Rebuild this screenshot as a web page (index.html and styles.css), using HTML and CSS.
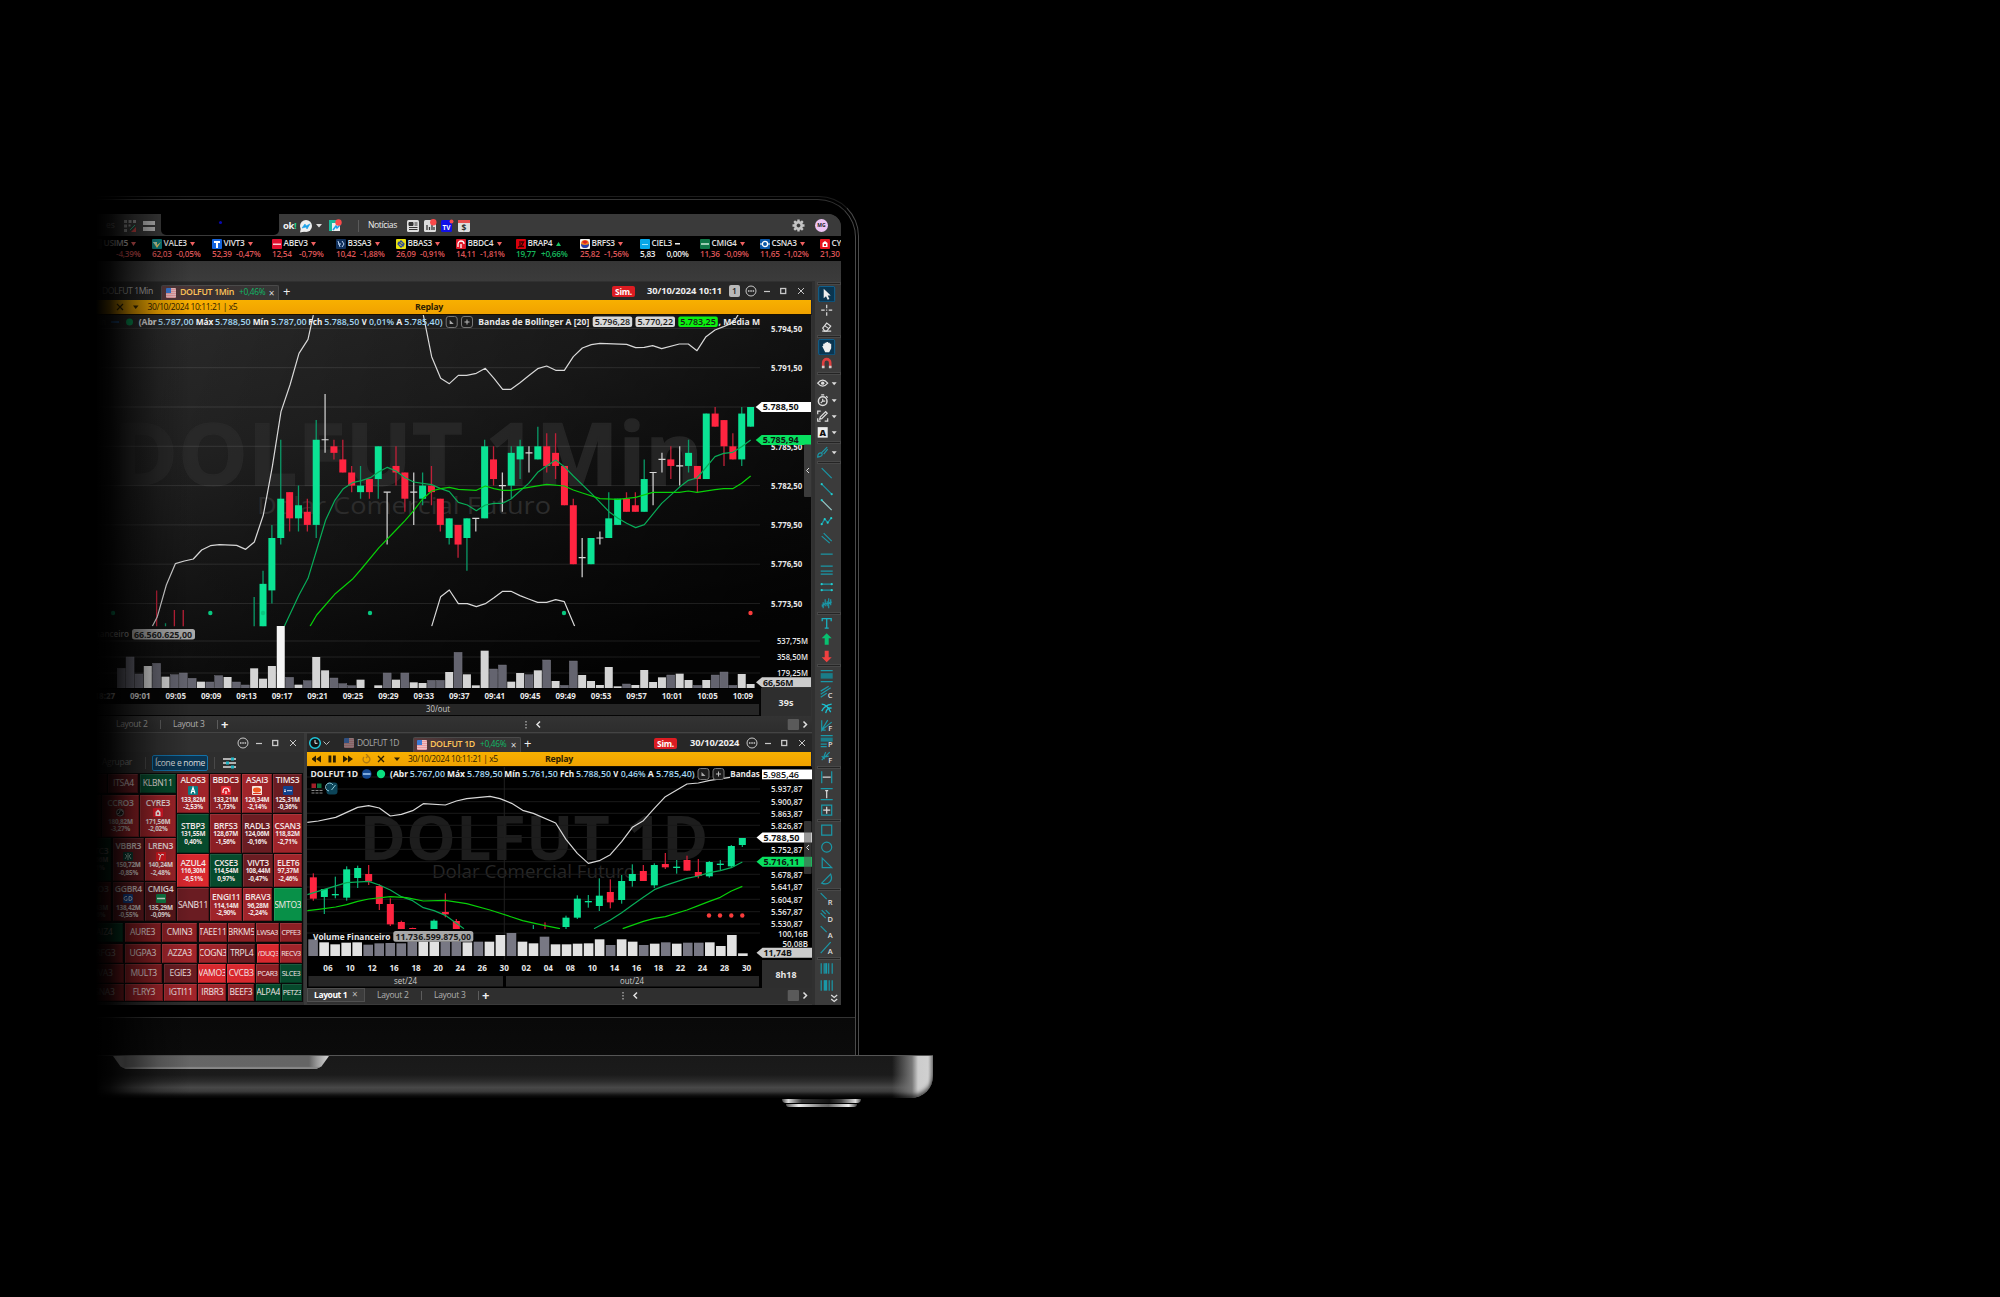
FILE: index.html
```html
<!DOCTYPE html>
<html lang="pt-BR">
<head>
<meta charset="utf-8">
<title>Trading platform</title>
<link rel="stylesheet" href="styles.css">
</head>
<body>
<main class="page">
<div class="laptop">
  <div class="lid">
    <div class="screen">
      <header class="appbar">
        <span class="faint">es</span>
        <svg width="12" height="12" viewBox="0 0 12 12"><path d="M0 0h3v3H0zM4.500 0h3v3h-3zM9 0h3v3H9zM0 4.500h3v3H0zM4.500 4.500h2v2h-2zM0 9h3v3H0z" fill="#999"/><path d="M7 12l5-5v5z" fill="#c44"/><path d="M6 10l5-5" stroke="#3b8" /></svg>
        <svg width="12" height="12" viewBox="0 0 12 12"><path d="M0 1h12v4H0zM0 7h12v4H0z" fill="#bdbdbd"/></svg>
        <div class="camera"><i></i></div>
        <b class="brand">ok<em>!</em></b>
        <svg width="14" height="14" viewBox="0 0 14 14"><circle cx="7" cy="7" r="6" fill="#eee"/><path d="M1 13.500l1-5 4 4z" fill="#eee"/><path d="M3 9l3-4 1 2 4-2-3 5-1-2z" fill="#18a0e8" stroke="#18a0e8" stroke-width=".6"/></svg>
        <svg width="6" height="4" viewBox="0 0 6 4"><path d="M0 0h6L3 3.5z" fill="#ddd"/></svg>
        <svg width="13" height="13" viewBox="0 0 13 13"><path d="M0 1h9v11H0z" fill="#19b89a"/><path d="M3 4h8v8H3z" fill="#eee"/><path d="M4 11l3-4 1 2 3-3" stroke="#18a0e8" stroke-width="1.600" fill="none"/><circle cx="9.500" cy="3.500" r="3.200" fill="#fa4a4a"/></svg>
        <span class="rule"></span>
        <span class="news">Notícias</span>
        <svg width="12" height="12" viewBox="0 0 12 12"><rect width="12" height="12" rx="1.500" fill="#ddd"/><path d="M2 2.500h4v3H2zM7.500 3h3M7.500 5h3M2 7.500h8.500M2 9.500h8.500" stroke="#333" fill="#333" stroke-width="1"/></svg>
        <svg width="13" height="13" viewBox="0 0 13 13"><rect y="1" width="12" height="12" rx="1.500" fill="#ddd"/><path d="M3 11V6M5.500 11V8M8 11V6M10 11V8" stroke="#333" stroke-width="1.300"/><circle cx="9.300" cy="3.300" r="3.200" fill="#fa4a4a"/></svg>
        <svg width="13" height="13" viewBox="0 0 13 13"><rect y="1" width="11" height="12" rx="1.500" fill="#1010e8"/><text x="5.500" y="10.500" text-anchor="middle" font-size="6.500" font-weight="700" fill="#fff">TV</text><circle cx="10.500" cy="2.500" r="2" fill="#fa4a4a"/></svg>
        <svg width="12" height="12" viewBox="0 0 12 12"><rect width="12" height="12" rx="1.500" fill="#ddd"/><path d="M0 0h12v3H0z" fill="#e95050"/><text x="6" y="11" text-anchor="middle" font-size="8.500" font-weight="700" fill="#333">$</text></svg>
        <svg class="gear" width="13" height="13" viewBox="-6.500 -6.500 13 13"><circle r="3.200" fill="none" stroke="#c4c4c4" stroke-width="2.600"/><path d="M0-6v3M0 3v3M-6 0h3M3 0h3M-4.300-4.300l2 2M2.300 2.300l2 2M-4.300 4.300l2-2M2.300-2.300l2-2" stroke="#c4c4c4" stroke-width="2.400"/></svg>
        <span class="avatar">MG</span>
      </header>
      <div class="ticker" id="ticker"></div>
      <div class="band"></div>
      <div class="desk">
        <div class="windows">
          <div class="winhead main-head">
            <span class="idle">DOLFUT 1Min</span>
            <div class="tab"><i class="flag"></i><b>DOLFUT 1Min</b><em>+0,46%</em><span>×</span></div>
            <span class="plus">+</span>
            <b class="sim">Sim.</b>
            <b class="date">30/10/2024 10:11</b>
            <span class="badge">1</span>
            <svg class="winbtns" width="62" height="12" viewBox="0 0 62 12"><use href="#wb"/></svg>
          </div>
          <div class="replay replay-main">
            <svg width="30" height="8" viewBox="0 0 30 8"><path d="M3 1l6 6M9 1l-6 6" stroke="#3a2a00" stroke-width="1.200"/><path d="M19 2.500h5.500L21.700 6z" fill="#3a2a00"/></svg>
            <span class="stamp">30/10/2024 10:11:21 | x5</span><b>Replay</b>
          </div>
          <svg class="chart" id="mainChart" width="732" height="401" viewBox="80 315 732 401"></svg>
          <div class="layouts layouts-main">
            <span>Layout 2</span><i></i><span>Layout 3</span><i></i><b class="add">+</b>
            <svg width="292" height="13" viewBox="520 0 292 13"><use href="#scroll"/></svg>
          </div>
          <div class="lower">
            <section class="heat">
              <div class="winhead heat-head"><svg class="winbtns" width="62" height="12" viewBox="0 0 62 12"><use href="#wb"/></svg></div>
              <div class="filters"><span>Agrupar</span><i></i><b>Ícone e nome</b><i></i>
                <svg width="14" height="12" viewBox="0 0 14 12"><path d="M0 2h13M0 6h13M0 10h13" stroke="#ddd" stroke-width="1.300"/><path d="M8 .5h3v3H8zM3 4.500h3v3H3zM8 8.500h3v3H8z" fill="#23b5c5"/></svg></div>
              <div class="map" id="map"></div>
            </section>
            <section class="daily">
              <div class="winhead daily-head">
                <svg width="24" height="14" viewBox="0 0 24 14"><circle cx="7" cy="7" r="5.300" fill="#111" stroke="#1fc8dc" stroke-width="1.500"/><path d="M7 4v3.300h2.500" stroke="#eee" fill="none"/><path d="M15.500 5.500l3 3 3-3" stroke="#bbb" fill="none"/></svg>
                <div class="idletab"><i class="flag"></i><span>DOLFUT 1D</span></div>
                <div class="tab"><i class="flag"></i><b>DOLFUT 1D</b><em>+0,46%</em><span>×</span></div>
                <span class="plus">+</span>
                <b class="sim">Sim.</b>
                <b class="date">30/10/2024</b>
                <svg class="winbtns" width="62" height="12" viewBox="0 0 62 12"><use href="#wb"/></svg>
              </div>
              <div class="replay replay-daily">
                <svg width="96" height="10" viewBox="5 0 96 10"><path d="M9 1.500v7L4.500 5zM14 1.500v7L9 5zM21.500 1.500h2.800v7h-2.800zM26 1.500h2.800v7H26zM36 1.500v7L41 5zM41 1.500v7L46 5z" fill="#2a1e00"/><path d="M60 2a3.400 3.400 0 1 1-3 1M59 0l2 2-2 2" stroke="#b07a10" fill="none" stroke-width="1.300"/><path d="M71 2l6 6M77 2l-6 6" stroke="#2a1e00" stroke-width="1.300"/><path d="M87 3.500h6L90 7z" fill="#2a1e00"/></svg>
                <span class="stamp">30/10/2024 10:11:21 | x5</span><b>Replay</b>
              </div>
              <svg class="chart" id="dailyChart" width="505" height="221" viewBox="307 767 505 221"></svg>
              <div class="layouts layouts-daily">
                <b class="on">Layout 1 <small>×</small></b><span>Layout 2</span><i></i><span>Layout 3</span><i></i><b class="add">+</b>
                <svg width="195" height="13" viewBox="617 0 195 13"><use href="#scroll2"/></svg>
              </div>
            </section>
          </div>
        </div>
        <aside class="tools" id="tools"></aside>
      </div>
    </div>
    <div class="chin"></div>
  </div>
  <div class="base"><div class="lip"></div></div>
  <div class="foot"><i></i><i></i></div>
  <div class="fade"></div>
</div>
</main>
<svg class="defs" width="0" height="0">
  <defs>
    <g id="wb" fill="none" stroke="#c8c8c8"><circle cx="6" cy="6" r="5"/><path d="M3 6h1.500M5.300 6h1.500M7.600 6h1.500" stroke-width="1.500"/><path d="M19 6.500h6" stroke-width="1.200"/><rect x="35.700" y="3.500" width="5" height="5" stroke-width="1.300"/><path d="M53 3l6 6M59 3l-6 6"/></g>
    <g id="scroll"><path d="M526 3v1.500M526 6v1.500M526 9v1.500" stroke="#bbb" stroke-width="1.200"/><path d="M540 3.500L537 6.500l3 3M803.500 3.500l3 3-3 3" fill="none" stroke="#e0e0e0" stroke-width="1.500"/><rect x="787.700" y="1" width="11.300" height="11" rx="1" fill="#5a5a5a"/></g>
    <g id="scroll2"><path d="M623 3v1.500M623 6v1.500M623 9v1.500" stroke="#bbb" stroke-width="1.200"/><path d="M637 3.500L634 6.500l3 3M803.500 3.500l3 3-3 3" fill="none" stroke="#e0e0e0" stroke-width="1.500"/><rect x="787.700" y="1" width="11.300" height="11" rx="1" fill="#5a5a5a"/></g>
  </defs>
</svg>
<script src="app.js"></script>
</body>
</html>
```

FILE: styles.css
```css
* { box-sizing: border-box; }
html, body { margin: 0; background: #000; }
body { font-family: "Open Sans", "Noto Sans", sans-serif; font-size: 8.5px; line-height: 1; color: #ddd; }
i, em { font-style: normal; }
svg { display: block; flex: none; }
svg text { font-family: "Open Sans", "Noto Sans", sans-serif; }
.defs { position: absolute; }
.page { width: 2000px; height: 1297px; overflow: hidden; background: #000; }
.laptop { position: relative; width: 860px; margin-left: 80px; padding-top: 196px; }
.fade { position: absolute; inset: 0 auto 0 0; width: 110px; background: linear-gradient(90deg, #000 0, #000 16px, rgba(0,0,0,.88) 30px, rgba(0,0,0,.52) 52px, rgba(0,0,0,.2) 78px, transparent 110px); }

/* lid */
.lid { position: relative; width: 779px; height: 859px; padding-top: 18px; border-top: 1px solid #1c1c1c; border-right: 1px solid #4a4a4a; border-radius: 0 40px 0 0; }
.lid::before { content: ""; position: absolute; inset: 2px 2px 0 0; border-top: 1px solid #333; border-right: 1px solid #4a4a4a; border-radius: 0 38px 0 0; }
.screen { position: relative; display: flex; flex-direction: column; width: 761px; height: 791px; margin-top: -1px; overflow: hidden; border-radius: 0 13px 0 0; background: #3a3a3a; }
.chin { width: 776px; height: 38px; margin-top: 12px; border-top: 1px solid #333; background: linear-gradient(#090909, #0b0b0b); }
.base { position: relative; width: 853px; height: 43px; border-top: 1px solid #555; border-radius: 0 0 22px 0;
  background: linear-gradient(90deg, transparent 812px, #777 832px, #ccc 838px, #d0d0d0 848px, #888 853px), linear-gradient(#191919 0, #1b1b1b 45%, #2c2c2c 60%, #484848 75%, #3c3c3c 85%, #161616 95%, #0a0a0a); box-shadow: inset 0 -4px 4px -1px rgba(0,0,0,.65); }
.lip { width: 216px; height: 13px; margin-left: 33px; clip-path: polygon(0 0, 100% 0, 96.5% 80%, 94% 100%, 6% 100%, 3.500% 80%); background: linear-gradient(90deg, #ddd 0, #777 12px, #666 20px, #656565 196px, #999 204px, #ccc 214px); box-shadow: inset 0 -2px 1px #888; }
.foot { display: flex; flex-direction: column; align-items: center; gap: 1px; width: 79px; margin-left: 702px; padding-top: 1px; }
.foot i { width: 79px; height: 4px; border-radius: 0 0 4px 4px; background: linear-gradient(90deg, #444, #ddd 8%, #333 25%, #111 60%, #444 75%, #ddd 93%, #444); }
.foot i + i { width: 71px; height: 3px; background: linear-gradient(90deg, #555, #eee 18%, #777 50%, #666 60%, #eee 88%, #444); }

/* application bar */
.appbar { display: grid; flex: none; height: 22px; align-items: center; padding: 1px 0 0 26px; background: #3a3a3a;
  grid-template-columns: 18px 19px 18px 122px 16px 17px 13px 29px 10px 39px 17px 17px 17px 334px 23px 14px; }
.faint { color: #aaa; }
.camera { align-self: start; width: 118px; height: 21px; margin-top: -1px; border-radius: 0 0 5px 5px; background: #000; }
.camera i { display: block; width: 3px; height: 3px; margin: 7px 0 0 58px; border-radius: 50%; background: #0a0ab0; }
.brand { font-size: 9.5px; letter-spacing: -.4px; color: #f2f2f2; }
.brand em { color: #1fd28f; }
.rule { width: 1px; height: 12px; background: #5a5a5a; }
.news { font-size: 8.600px; letter-spacing: -.4px; color: #eee; font-weight: 500; }
.avatar { width: 13px; height: 13px; border-radius: 50%; background: #edc4f4; color: #222; font-size: 5px; line-height: 13px; text-align: center; font-weight: 700; }
.gear { justify-self: start; }

/* quotes */
.ticker { display: flex; flex: none; height: 25px; padding: 2px 0 0 12px; overflow: hidden; background: #000; }
.quote { display: grid; flex: none; grid-template-rows: 11px 11px; align-items: center; width: 60px; white-space: nowrap; font-size: 8.300px; letter-spacing: -.25px; color: #e0e0e0; font-weight: 600; }
.quote.wide { width: 64px; }
.quote div { display: flex; align-items: center; gap: 1.500px; }
.quote .vals { justify-content: space-between; width: 48.500px; font-size: 8.200px; letter-spacing: -.25px; font-weight: 600; }
.quote.wide .vals { width: 51.500px; }
.quote .ico { width: 10px; height: 10px; border-radius: 1px; }
.quote .arr { margin-left: 2px; }
.down .vals { color: #dc5456; }
.up .vals { color: #16b85c; }
.flat .vals { color: #eee; }

.band { flex: none; height: 20px; background: linear-gradient(#363636, #3b3b3b); }
.desk { display: flex; flex: 1; }
.windows { width: 732px; }

/* window headers */
.winhead { display: grid; height: 19px; align-items: center; background: #272727; border-top: 1px solid #303030; white-space: nowrap; }
.main-head { padding-left: 22px; grid-template-columns: 59px 120px 331px 35px 82px 16px 62px; }
.daily-head { grid-template-columns: 36px 69px 109px 132px 36px 56px 62px; padding-left: 1px; }
.heat-head { grid-template-columns: 62px; padding-left: 157px; background: #303030; }
.idle { font-size: 8.600px; letter-spacing: -.4px; color: #bbb; }
.tab { display: flex; align-items: center; align-self: end; width: 118px; height: 15px; padding: 0 0 1px 4px; border: 1px solid #4a4a4a; border-bottom: 0; border-radius: 2px 2px 0 0; background: linear-gradient(90deg, #5a3a3c, #3a3233 45px, #363636); color: #ffc55a; font-size: 8.800px; letter-spacing: -.35px; }
.daily-head .tab { width: 108px; padding-left: 3px; }
.tab b { margin: 0 5px 0 4px; font-weight: 600; }
.daily-head .tab b { margin: 0 5px 0 3px; }
.tab em { color: #10b866; font-size: 8.300px; letter-spacing: -.25px; }
.tab span { margin-left: auto; padding-right: 4px; color: #ddd; font-size: 10px; }
.flag { flex: none; width: 10px; height: 10px; border-radius: 1px; background: linear-gradient(#3a7ad8, #3a7ad8) 0 0/5px 5px no-repeat, repeating-linear-gradient(#f0c0c4 0 1px, #e89aa2 1px 2px); }
.idletab { display: flex; align-items: center; gap: 3px; font-size: 8.500px; letter-spacing: -.4px; color: #a8a8a8; }
.idletab .flag { opacity: .5; }
.plus { font-size: 13px; color: #eee; padding-left: 2px; }
.sim { width: 23px; height: 11px; border-radius: 2px; background: #dc1c22; color: #fff; font-size: 8.500px; line-height: 11px; letter-spacing: -.3px; text-align: center; }
.date { font-size: 9.300px; letter-spacing: -.1px; color: #eee; }
.badge { width: 11px; height: 12px; border-radius: 2px; background: #b8b8b8; color: #222; line-height: 12px; text-align: center; font-weight: 600; }

.replay { display: grid; height: 15px; align-items: center; border-right: 1px solid #1c2436; background: linear-gradient(#f8b000, #f0a200); border-bottom: 1px solid #191000; color: #2e2000; }
.replay-main { padding-left: 34px; grid-template-columns: 33.500px 267.500px 60px; }
.replay-daily { padding-left: 5px; grid-template-columns: 96px 137px 60px; }
.replay b { font-size: 8.800px; letter-spacing: -.25px; }
.stamp { font-size: 8.500px; letter-spacing: -.4px; font-weight: 500; white-space: nowrap; }

.layouts { display: grid; align-items: center; background: #2f2f2f; white-space: nowrap; color: #b0b0b0; font-size: 8.500px; letter-spacing: -.3px; }
.layouts i { width: 1px; height: 9px; background: #5c5c5c; }
.layouts .add { font-size: 13px; color: #eee; }
.layouts-main { height: 17px; padding-left: 36px; grid-template-columns: 44px 13px 44px 4px 299px 292px; background: linear-gradient(#333, #2d2d2d); border-bottom: 1px solid #444; }
.layouts-daily { height: 16px; padding-bottom: 2px; grid-template-columns: 70px 44px 13px 44px 4px 135px 195px; }
.on { width: 58px; height: 14px; padding-left: 7px; background: #3c3c3c; border: 1px solid #505050; color: #fff; line-height: 12px; }
.layouts-daily .on { padding-left: 6px; letter-spacing: -.4px; }
.on small { font-size: 10px; font-weight: 400; line-height: 1; margin-left: 3px; color: #bbb; }

/* lower panes */
.lower { display: flex; height: 272px; background: #3a3a3a; gap: 3px; }
.heat { width: 224px; background: #2e2e2e; }
.daily { width: 505px; }
.filters { display: grid; height: 21px; align-items: center; padding-left: 22px; grid-template-columns: 43px 7px 62px 9px 20px; font-size: 8.500px; letter-spacing: -.3px; white-space: nowrap; color: #999; }
.filters i { width: 1px; height: 12px; background: #484848; }
.filters b { width: 56px; height: 16px; border: 1px solid #1271a8; border-radius: 2px; background: #0b3552; color: #dcdcdc; font-weight: 500; line-height: 14px; text-align: center; }
.map { display: grid; gap: 1.3px; width: 223px; height: 229px; padding: 1px 1px 1px 0; background: #0a0a0a; grid-template-rows: 147.300px 1fr; }
.map-top { display: flex; gap: 1.300px; }
.map-col { display: flex; flex-direction: column; gap: 1.300px; }
.map-row { display: flex; gap: 1.300px; min-height: 0; }
.cell { display: flex; flex-direction: column; align-items: center; justify-content: center; gap: 1.300px; min-width: 0; overflow: hidden; border: 1px solid rgba(255,255,255,.09); border-right-color: rgba(0,0,0,.25); border-bottom-color: rgba(0,0,0,.25); white-space: nowrap; font-size: 6.400px; font-weight: 700; letter-spacing: -.2px; color: #f2e6e6; }
.cell b { font-size: 8.500px; font-weight: 500; letter-spacing: -.25px; }
.cell.big b { font-weight: 600; }
.cell b.sm { font-size: 7.300px; letter-spacing: -.4px; }
.cell .ico { width: 10px; height: 9px; border-radius: 1px; }

/* drawing tools */
.tools { display: flex; flex-direction: column; width: 29px; padding-top: 2px; border-left: 3px solid #303030; background: #3b3b3b; }
.tools hr { width: 22px; height: 1px; margin: 0 0 0 3px; border: 0; background: #242424; outline: .5px solid #484848; }
.tools > hr { flex: none; margin-bottom: 2px; }
.tools .gap { display: flex; flex: none; align-items: center; height: 4px; }
.tools svg { display: block; }
```

FILE: app.js
```js
const F = (n) => +n.toFixed(2);
const text = (x, y, s, o = {}) =>
  `<text x="${F(x)}" y="${F(y + (o.size || 9) * 0.357)}" font-size="${o.size || 9}" font-weight="${o.weight || 600}" fill="${o.fill || '#e8e8e8'}"` +
  `${o.anchor ? ` text-anchor="${o.anchor}"` : ''}${o.len ? ` textLength="${F(o.len)}" lengthAdjust="spacingAndGlyphs"` : ''}>${s}</text>`;
const rect = (x, y, w, h, fill, extra = '') => `<rect x="${F(x)}" y="${F(y)}" width="${F(w)}" height="${F(h)}" fill="${fill}" ${extra}/>`;
const line = (x1, y1, x2, y2, c, w = 1) => `<path d="M${F(x1)} ${F(y1)}L${F(x2)} ${F(y2)}" stroke="${c}" stroke-width="${w}"/>`;
const curve = (pts, c, w = 1.2) => `<polyline points="${pts}" fill="none" stroke="${c}" stroke-width="${w}" stroke-linejoin="round" vector-effect="non-scaling-stroke"/>`;
const tag = (x, y, label, fill, o = {}) =>
  `<path d="M${x} ${y}l6-5H812v10H${x + 6}z" fill="${fill}"/>` + text(x + 7, y, label, { fill: '#111', weight: 700, len: o.len || 36 });
const GREEN = '#0be394', RED = '#ff2440', WHITE = '#d8d8d8', MA1 = '#08ac58', MA2 = '#08d008';

/* ---- quotes ---- */
const quotes = [
  ['USIM5', '', '-4,39%', 'down', '#333', 0], ['VALE3', '62,03', '-0,05%', 'down', '#0c7c7c', 0], ['VIVT3', '52,39', '-0,47%', 'down', '#1464dc', 0],
  ['ABEV3', '12,54', '-0,79%', 'down', '#e01030', 1], ['B3SA3', '10,42', '-1,88%', 'down', '#10305c', 0], ['BBAS3', '26,09', '-0,91%', 'down', '#e8e010', 0],
  ['BBDC4', '14,11', '-1,81%', 'down', '#e01828', 0], ['BRAP4', '19,77', '+0,66%', 'up', '#d8000c', 1], ['BRFS3', '25,82', '-1,56%', 'down', '#f4f4f4', 0],
  ['CIEL3', '5,83', '0,00%', 'flat', '#08a8e8', 0], ['CMIG4', '11,36', '-0,09%', 'down', '#107848', 0], ['CSNA3', '11,65', '-1,02%', 'down', '#0c58a8', 0],
  ['CYRE3', '21,30', '-2,02%', 'down', '#e81420', 0]];
const marks = {
  VALE3: '<path d="M1 3h4l0 3 4-3-4 6z" fill="#e8c860"/><path d="M1 3h3l1 4z" fill="#9fd8d0"/>', VIVT3: '<path d="M2 2h6v2H6v5H4V4H2z" fill="#fff"/>',
  ABEV3: '<path d="M1 4.500h8v1.500H1z" fill="#f8c8d0"/>', B3SA3: '<path d="M2 2l2 6M2 5h3M6 2l2 3-2 3" stroke="#b8d0f0" fill="none"/>',
  BBAS3: '<path d="M2 5l3-3 3 3-3 3zM2 3l6 4" stroke="#2848a0" stroke-width="1.300" fill="none"/>', BBDC4: '<path d="M2 8V5a3 3 0 0 1 6 0M5 9V5" stroke="#fff" stroke-width="1.300" fill="none"/>',
  BRAP4: '<path d="M4 2v5a2 2 0 0 1-2 1M5 3h2.500L5 7.500h3" stroke="#300" stroke-width="1.300" fill="none"/>', BRFS3: '<circle cx="5" cy="5" r="4" fill="#f08020"/><path d="M1 5a4 4 0 0 0 8 0q-4 2-8 0" fill="#2840b0"/><path d="M2 3q3-3 6 0l-3 2z" fill="#e02020"/>',
  CIEL3: '<path d="M2 5.500h6" stroke="#9ce4fa" stroke-width="1.200"/>', CMIG4: '<path d="M1 5h8" stroke="#c8e8d4" stroke-width="1.400"/>',
  CSNA3: '<circle cx="5" cy="5" r="2.600" fill="none" stroke="#fff" stroke-width="1.300"/><path d="M0 5h3M7 5h3" stroke="#fff"/>', CYRE3: '<path d="M2.500 4L5 2l2.500 2v4h-5z" fill="#fff"/><path d="M4 5h2v2H4z" fill="#e81420"/>', USIM5: '' };
const arrow = { down: '<path d="M0 1h5L2.500 5z" fill="#f06060"/>', up: '<path d="M0 5h5L2.500 1z" fill="#18c060"/>', flat: '<path d="M0 2h5v1.600H0z" fill="#eee"/>' };
document.getElementById('ticker').innerHTML = quotes.map(([n, p, v, d, c, w]) =>
  `<div class="quote ${d}${w ? ' wide' : ''}"><div><svg class="ico" viewBox="0 0 10 10">${rect(0, 0, 10, 10, c)}${marks[n]}</svg>${n}<svg class="arr" width="5" height="6">${arrow[d]}</svg></div><div class="vals"><span>${p}</span><span>${v}</span></div></div>`).join('');

/* ---- one minute chart ---- */
const X = (k) => 750.6 - 8.865 * k;
const Y = (p) => 407 + (88.5 - p) * 13.1;
// [bars ago, open, high, low, close]
const bars = [[67,73,74.5,71.7,71.7],[66,71.7,72,71.7,71.8],[65,72,73,71.7,71.7],[64,72,73,71.7,71.7],[56,71.7,74,71.7,71.8],[55,71.7,76,71.7,75],[54,74.5,79.5,73.5,78.5],[53,78.5,86,78,81.5],[52,82,82,79,80],[51,80,82.5,79,81],[50,80.5,81.5,79,79.5],[49,79.5,87.5,78.5,86],[48,86,89.5,85,86],[47,85.5,86,84.5,85],[46,84.5,86,83.5,83.5],[45,83.5,84,82,82.5],[44,82,84,81.5,82.5],[43,83,83,81.5,82],[42,83,85.5,81.5,85.5],[41,82,82,78,82],[40,84,85.5,82.5,83.5],[39,83.5,83.5,80.5,81.5],[38,82,83.5,79.5,82],[37,81.5,83.5,81,82.5],[36,82.5,84,81,82],[35,81.5,81.5,79,79.5],[34,78.5,80,78,80],[33,79.5,79.5,77,78],[32,78.5,80,76,80],[31,80,80,79,80],[30,80,86,80,85.5],[29,84.5,85.5,82.5,83],[28,82.5,83.5,80.5,82.5],[27,82.5,85.5,81.5,85],[26,84.5,86,83,85.5],[25,85,85.5,83.5,85],[24,84.5,87,84.5,85.5],[23,85.5,86.5,83.5,84],[22,85,86.5,83,84],[21,84,84,81,81],[20,81,81.5,76.5,76.5],[19,77,78.5,75.5,77],[18,76.5,78.5,76.5,78.5],[17,78.5,79,78,78.5],[16,78.5,82,78.5,80],[15,79.5,81.5,79.5,81.5],[14,81.5,82,80.5,80.5],[13,81,82,80.5,80.5],[12,80.5,84.5,80.5,83],[11,83.5,83.5,81,83.5],[10,84.5,85,83.5,84.5],[9,84.5,85.5,83,84],[8,84,85.5,82.5,84],[7,84,86,83.5,85],[6,84,84,82,83],[5,83,88,83,88],[4,88,88.5,87,87],[3,87.5,87.5,84,85.5],[2,85.5,86.5,84.5,84.5],[1,84.5,88.5,84,88],[0,87,88.5,87,88.5]];
const vols = 'g59 g93 g42 w66 g74 w34 g40 g45 g29 w19 g18 g37 w33 g18 g9 w59 w28 w66 w186 g32 w10 g22 w93 w53 g30 g13 g7 w25 w0 w8 g45 w25 g45 w17 w15 g23 g23 w48 g107 w41 w8 w112 g57 g69 w19 w45 g40 w53 g84 w21 g8 g81 w39 w21 w9 w63 w5 g12 w9 w54 w18 w32 g39 w43 w24 g8 w24 g39 g48 g8 w42 w12'.split(' ');
const button = (x, y, plus) => `<rect x="${x - 5.5}" y="${y - 5.5}" width="11" height="11" rx="2.500" fill="#1c1c1c" stroke="#777"/>` + (plus ? `<path d="M${x - 2.5} ${y}h5M${x} ${y - 2.5}v5" stroke="#bbb"/>` : `<path d="M${x - 2} ${y - 2}v4h4z" fill="#aaa"/>`);

let m = `<defs><linearGradient id="bg" x1="0" y1="0" x2=".45" y2="1"><stop offset="0" stop-color="#2e2e2e"/><stop offset=".35" stop-color="#252525"/><stop offset="1" stop-color="#060606"/></linearGradient>
<linearGradient id="bgv" x1="0" x2="1" y1="0" y2=".3"><stop offset="0" stop-color="#000" stop-opacity="0"/><stop offset="1" stop-color="#000" stop-opacity=".55"/></linearGradient><clipPath id="plot"><rect x="80" y="315" width="680" height="311.300"/></clipPath></defs>`;
m += rect(80, 315, 732, 401, 'url(#bg)') + rect(80, 315, 732, 401, 'url(#bgv)') + rect(80, 689, 680, 27, '#050505');
m += text(113, 454.5, 'DOLFUT 1Min', { size: 86, weight: 700, fill: '#2a2a2a', len: 590 }).replace('fill=', 'stroke="#2a2a2a" stroke-width="1.500" opacity=".8" fill=');
m += text(257, 505, 'Dolar Comercial Futuro', { size: 24, weight: 400, fill: '#2c2c2c', len: 294 });
for (let p = 94.5; p > 73; p -= 3) m += line(80, Y(p), 760, Y(p), 'rgba(255,255,255,.1)', 1);
[641, 657, 673].forEach((y) => (m += line(80, y, 760, y, 'rgba(255,255,255,.1)', 1)));
m += '<g clip-path="url(#plot)">';
for (const [k, o, h, l, c] of bars) {
  const x = X(k), col = o === c ? '#d8d8d8' : c > o ? GREEN : RED;
  m += line(x, Y(h), x, Y(l), o === c ? '#c8c8c8' : c > o ? '#0a9a68' : '#c02038', 1.3);
  if (o === c) m += line(x - 3.5, Y(o), x + 3.5, Y(o), col, 1.2);
  else if (Math.abs(c - o) > 0.4 && k < 56) m += rect(x - 3.5, Y(Math.max(o, c)), 7, Math.abs(c - o) * 13.1, col);
}
m += '<g transform="translate(90 300) scale(.33333)">' +
  curve('187,979 202,950 229,855 256,791 283,783 310,777 335,750 361,737 388,734 440,736 467,748 493,726 520,645 547,500 573,335 600,255 627,160 654,118 670,45', WHITE) +
  curve('1000,45 1025,170 1052,235 1078,251 1105,226 1130,226 1159,220 1186,205 1212,235 1238,268 1263,268 1290,248 1316,227 1343,206 1370,198 1397,211 1423,211 1450,170 1477,144 1504,134 1530,130 1610,133 1637,143 1663,142 1688,137 1715,146 1768,132 1795,132 1821,152 1848,110 1875,90 1901,80 1920,72 1935,60 1945,43', WHITE) +
  curve('1025,979 1052,890 1078,870 1105,911 1132,911 1159,920 1186,911 1212,893 1238,874 1263,874 1290,887 1316,897 1343,907 1370,907 1397,899 1423,905 1454,979', WHITE) +
  curve('583,979 627,885 654,835 680,750 707,660 734,602 760,566 787,548 814,542 841,533 867,515 892,502 918,513 945,533 971,546 998,550 1025,554 1052,566 1078,575 1105,607 1132,615 1159,632 1186,615 1212,610 1238,610 1263,597 1290,573 1316,550 1343,517 1370,498 1397,480 1423,500 1450,528 1504,580 1557,635 1584,655 1610,670 1637,683 1663,674 1688,643 1715,610 1768,562 1795,541 1821,534 1848,502 1875,470 1901,460 1928,457 1955,440 1982,420', MA1) +
  curve('660,979 680,945 734,883 787,838 814,807 867,743 918,690 945,662 971,632 998,597 1025,573 1052,566 1078,562 1105,568 1159,571 1186,558 1212,566 1238,571 1263,571 1316,562 1370,553 1423,558 1450,570 1477,579 1530,596 1584,598 1637,592 1688,577 1768,577 1795,573 1821,577 1875,569 1901,566 1928,566 1955,550 1982,528', MA2) + '</g></g>';
[[113, 0], [210.3, 0], [263, 0], [370, 0], [564, 0], [750.5, 1]].forEach(([x, r]) => (m += `<circle cx="${x}" cy="613" r="2.200" fill="${r ? '#fa3c3c' : '#08c880'}"/>`));
vols.forEach((v, i) => { const h = +v.slice(1) / 3; if (h) m += rect(X(71 - i) - 4, 688 - h, 8, h, v[0] === 'g' ? '#64646f' : h > 50 ? '#f4f4f4' : '#d4d4d4', v[0] === 'g' ? 'stroke="#7a7a86" stroke-width=".4"' : ''); });
m += line(80, 688.5, 761, 688.5, '#000', 1);
m += text(88, 634, 'Financeiro', { weight: 600, fill: '#999', len: 41 }) + rect(132, 629, 63, 10.5, '#a8a8a8', 'rx="2.500"') + text(134, 634.3, '66.560.625,00', { weight: 700, fill: '#1a1a1a', len: 58 });
const header = (list, y) => list.map(([x, w, s, v]) => text(x, y, s, { weight: v ? 600 : 700, fill: v ? '#a4d8f4' : '#f0f0f0', len: w, size: 9.3 })).join('');
m += text(88, 322, '1Min', { fill: '#555', len: 18 }) + line(111, 322, 119, 322, '#2860a0', 2) + '<circle cx="129.500" cy="322" r="3.500" fill="#0a9c58"/>';
m += header([[138.7, 18, '(Abr', 0], [158, 35.7, '5.787,00', 1], [195.7, 17.7, 'Máx', 0], [215, 35.7, '5.788,50', 1], [252.7, 16, 'Mín', 0], [271, 35.7, '5.787,00', 1], [308.3, 14, 'Fch', 0], [324.3, 35, '5.788,50', 1], [361.7, 5, 'V', 0], [369, 25, '0,01%', 1], [396.3, 6, 'A', 0], [404.3, 38.3, '5.785,40)', 1]], 321.8);
m += button(451.7, 322, 0) + button(467, 322, 1) + text(478.3, 321.8, 'Bandas de Bollinger A [20]', { weight: 700, len: 111 });
[[592.7, '5.796,28', '#d8d8d8'], [635.5, '5.770,22', '#d8d8d8'], [678.3, '5.783,25', '#0cf010']].forEach(([x, s, c]) => (m += rect(x, 316.5, 39.5, 10.5, c, 'rx="2"') + text(x + 2, 321.8, s, { weight: 600, fill: '#1a1a1a', len: 35.5 })));
m += text(718.5, 321.8, ', Média M', { weight: 700, len: 41.5 });
['94,50', '91,50', '', '85,50', '82,50', '79,50', '76,50', '73,50'].forEach((s, i) => { if (s) m += text(771, 328.4 + i * 39.3, '5.7' + s, { len: 31.3, weight: 700 }); });
m += text(808, 641, '537,75M', { anchor: 'end', len: 31 }) + text(808, 657, '358,50M', { anchor: 'end', len: 31 }) + text(808, 673, '179,25M', { anchor: 'end', len: 31 });
m += rect(761, 688, 51, 28, '#2e2e2e') + tag(755.7, 407, '5.788,50', '#fff') + tag(755.7, 440, '5.785,94', '#08e060') + tag(756, 682.3, '66,56M', '#ccc', { len: 30.5 });
m += rect(804, 444.5, 7.5, 52.5, '#3c3c3c', 'rx="1"') + '<path d="M809 468l-2.500 2.500 2.500 2.500" fill="none" stroke="#ddd"/>' + text(786, 703.2, '39s', { anchor: 'middle', size: 9, weight: 700 });
['18:27', '09:01', '09:05', '09:09', '09:13', '09:17', '09:21', '09:25', '09:29', '09:33', '09:37', '09:41', '09:45', '09:49', '09:53', '09:57', '10:01', '10:05', '10:09'].forEach((s, i) => (m += text(104.8 + i * 35.45, 696, s, { anchor: 'middle', len: 20.5, weight: 700 })));
m += rect(80, 704, 679, 11, '#262626') + text(438, 709.3, '30/out', { anchor: 'middle', size: 8.5, weight: 400, fill: '#ccc', len: 24 });
m += rect(811, 315, 1, 401, '#333');
document.getElementById('mainChart').innerHTML = m;

/* ---- daily chart ---- */
let d = '<defs><clipPath id="plot2"><rect x="307" y="767" width="453" height="162"/></clipPath></defs>' + rect(307, 767, 505, 221, '#000');
d += text(359.5, 838, 'DOLFUT 1D', { size: 61, weight: 700, fill: '#1d1d1d', len: 349 }) + text(432, 871.5, 'Dolar Comercial Futuro', { size: 18.5, weight: 400, fill: '#262626', len: 203 });
const grid = [777, 789, 801.7, 813.3, 825.3, 837.5, 849.3, 861.7, 874.3, 887, 899.3, 911.7, 924, 933];
grid.forEach((y) => (d += line(307, y, 760, y, '#1a1a1a')));
d += line(504.3, 767, 504.3, 960, '#202020');
// [x, top, bottom, high, low, direction]; equal top and bottom marks a doji
const days = [[40,457,521,445,527,0],[73,492,516,492,567,1],[106,509,509,455,520,1],[140,433,518,424,527,1],[173,429,459,422,489,1],[206,447,469,420,480,0],[238,483,537,478,555,0],[271,537,598,520,603,0],[304,591,612,587,612,0],[338,609,612,608,612,0],[402,587,612,583,612,1],[436,561,568,505,577,0],[469,588,612,582,612,0],[700,612,612,600,612,1],[735,606,608,592,612,0],[798,578,606,572,612,1],[832,521,578,511,582,1],[865,530,530,510,548,1],[898,512,543,460,558,1],[931,501,532,463,550,0],[965,468,525,450,536,1],[997,447,468,418,485,1],[1030,438,468,420,468,0],[1063,420,481,415,489,1],[1096,417,427,384,432,0],[1130,427,427,405,446,1],[1161,405,437,392,437,0],[1195,441,453,402,460,0],[1228,411,454,408,458,1],[1261,418,418,405,436,1],[1294,363,424,360,428,1],[1327,339,360,339,366,1]];
d += '<g clip-path="url(#plot2)"><g transform="translate(300 725) scale(.33333)">';
for (const [x, t, b, h, l, up] of days) { d += rect(x - 1.8, h, 3.6, l - h, up ? '#0bb078' : '#d82038'); if (x !== 700 && x !== 735) d += rect(x - 10.5, t === b ? t - 2 : t, 21, Math.max(b - t, 4), up ? GREEN : RED); }
d += curve('22,292 55,288 107,277 140,262 173,247 206,242 238,249 271,273 304,268 338,257 370,236 436,240 469,228 500,221 570,214 600,221 635,235 668,256 700,265 767,294 798,343 832,385 865,415 898,407 931,389 965,350 997,307 1030,287 1063,250 1096,215 1161,177 1195,174 1230,166 1290,157', WHITE) +
  curve('22,509 73,493 140,473 206,469 238,480 271,495 304,515 338,527 370,548 402,557 436,571 469,595 492,611', MA1) + curve('882,611 931,585 965,563 997,540 1030,517 1063,494 1096,481 1160,460 1195,453 1228,443 1261,437 1294,428 1327,411', MA1) +
  curve('22,557 55,553 107,546 140,539 173,529 206,522 271,515 320,518 370,528 436,526 500,536 570,555 635,576 668,587 735,602 780,611', MA2) + curve('968,611 1030,589 1063,580 1096,575 1161,555 1195,542 1228,529 1261,517 1294,498 1327,484', MA2) + '</g></g>';
[709, 720, 731.3, 742.3].forEach((x) => (d += `<circle cx="${x}" cy="915.500" r="2.200" fill="#fa3c3c"/>`));
'g643 w652 w658 w653 w652 g659 g655 g654 g655 g650 w650 w650 g650 g650 w652 g650 w650 w630 g624 w650 w655 g635 w658 w658 w656 w655 w643 g660 w643 w650 g660 w656 g652 w656 g653 g653 w652 w663 w630 w685'.split(' ').forEach((v, i) => { const h = (693 - +v.slice(1)) / 3; d += rect(308.3 + i * 11.02, 956 - h, 9.6, h, v[0] === 'g' ? '#787884' : '#e2e2e2'); });
d += text(313, 936.3, 'Volume Financeiro', { weight: 700, len: 77.5 }) + rect(393.3, 931, 80, 10.8, '#a8a8a8', 'rx="2.500"') + text(395.5, 936.5, '11.736.599.875,00', { weight: 700, fill: '#1a1a1a', len: 75.5 });
d += text(310.5, 773.8, 'DOLFUT 1D', { weight: 700, len: 47.5 }) + '<circle cx="366.700" cy="774" r="4.800" fill="#144a94"/><path d="M363 774h7.500" stroke="#9cc4f0" stroke-width="1.600"/><circle cx="381" cy="774" r="4.200" fill="#0be080"/>';
d += header([[390, 18, '(Abr', 0], [409.7, 35.3, '5.767,00', 1], [447, 18, 'Máx', 0], [467, 35.7, '5.789,50', 1], [504.3, 16, 'Mín', 0], [522.3, 35.7, '5.761,50', 1], [560, 14, 'Fch', 0], [576, 35, '5.788,50', 1], [613.3, 5, 'V', 0], [620.7, 25, '0,46%', 1], [647.7, 6, 'A', 0], [656, 38.7, '5.785,40)', 1]], 773.8);
d += button(703.5, 774, 0) + button(718.5, 774, 1) + text(730.3, 773.8, 'Bandas', { weight: 700, len: 29.5 });
d += '<path d="M311.500 783.500h4.500v4.500h-4.500z" fill="#a02028"/><path d="M317 783.500h4.500v4.500H317z" fill="#107040"/><path d="M311.500 790.500h11M311.500 793h11" stroke="#888" stroke-dasharray="3 1"/><rect x="326.500" y="782.500" width="11" height="12" rx="3" fill="#0c4458"/><path d="M329 791a4 4 0 1 1 4-6M331.500 790l4-5" stroke="#8cc8d8" fill="none"/>';
['937', '900', '863', '826', '', '752', '', '678', '641', '604', '567', '530'].forEach((s, i) => { if (s) d += text(771, grid[i + 1], `5.${s},87`, { len: 31.5 }); });
d += text(808, 933.5, '100,16B', { anchor: 'end', len: 30 }) + text(808, 943.5, '50,08B', { anchor: 'end', len: 25.500 });
d += rect(762, 960, 50, 28, '#2e2e2e') + rect(762, 769.5, 50, 9.8, '#fff') + text(763, 774.3, '5.985,46', { fill: '#111', weight: 600, len: 36 });
d += tag(756.5, 837.5, '5.788,50', '#fff') + tag(756.5, 861.8, '5.716,11', '#08e060') + tag(756.5, 952.8, '11,74B', '#ccc', { len: 28.5 });
d += rect(804, 821, 7.5, 53, '#555', 'opacity=".6" rx="1"') + rect(804, 843, 7.5, 13, '#333') + '<path d="M809 845l-2.500 2.500 2.500 2.500" fill="none" stroke="#ddd"/>' + text(786, 974.5, '8h18', { anchor: 'middle', len: 21, weight: 700 });
['06', '10', '12', '16', '18', '20', '24', '26', '30', '02', '04', '08', '10', '14', '16', '18', '22', '24', '28', '30'].forEach((s, i) => (d += text(328 + i * 22.03, 967.3, s, { anchor: 'middle', len: 9.3, weight: 700 })));
d += rect(308.5, 976, 194.5, 10.5, '#262626') + rect(506, 976, 253, 10.5, '#262626') + text(405.5, 981, 'set/24', { anchor: 'middle', size: 8.5, weight: 400, fill: '#ccc', len: 23 }) + text(632, 981, 'out/24', { anchor: 'middle', size: 8.5, weight: 400, fill: '#ccc', len: 24 });
document.getElementById('dailyChart').innerHTML = d;

/* ---- heat map: [name, width, tone, value, change, icon colour] ---- */
const tone = { r: '#8c1f24', R: '#a0242a', b: '#d8282e', d: '#6a1c22', k: '#5a171c', g: '#064a2c', G: '#089048' };
const logos = {
  ALOS3: '<path d="M3 7.500L5 1.500l2 6M3.500 5.500h3" stroke="#fff" stroke-width="1.200" fill="none"/>', BBDC3: '<path d="M2 7V5a3 3 0 0 1 6 0v1M5 8V5" stroke="#fff" stroke-width="1.200" fill="none"/>',
  ASAI3: '<path d="M0 0h10v9H0z" fill="#f4e8e0"/><ellipse cx="5" cy="4" rx="4" ry="2.500" fill="#f05820"/><path d="M1 7.500h8" stroke="#e03020"/>', TIMS3: '<path d="M1 4h2M1 5.500h2M4 4.700h5" stroke="#d0dcf0"/>',
  CCRO3: '<circle cx="5" cy="4.500" r="3.500" fill="#222" stroke="#aaa"/><path d="M2 6q3 0 3-3t3 1" stroke="#aaa" fill="none"/>', CYRE3: '<path d="M2.500 4L5 1.500 7.500 4v4h-5z" fill="#fff"/><path d="M4 4.500h2v2H4z" fill="#e81828"/>',
  VBBR3: '<path d="M2 2l2 2-2 3M8 2L6 4l2 3M5 1v7" stroke="#a8d0c0" fill="none"/>', LREN3: '<path d="M3.500 8l1-5M4 4q2-3 4-1M2 2l2 1" stroke="#fff" fill="none"/>',
  RECO3: '', GGBR4: '<path d="M4 2.500H3a2 2 0 0 0 0 4h1v-2M6 2.500h1a2 2 0 0 1 0 4H6z" stroke="#e0e8f8" fill="none"/>', CMIG4: '<path d="M1 4.500h8" stroke="#d8f0e0" stroke-width="1.400"/>' };
const cell = ([n, w, t, v, c, ic]) => `<div class="cell${v ? ' big' : ''}" style="flex:${w} 1 0;background:${tone[t]}"><b class="${w < 74 && !v ? 'sm' : ''}">${n}</b>${ic ? `<svg class="ico" viewBox="0 0 10 9">${rect(0, 0, 10, 9, ic)}${logos[n]}</svg>` : ''}${v ? `<span>${v}</span><span>${c}</span>` : ''}</div>`;
const row = ([h, ...cells]) => `<div class="map-row" style="flex:${h} 1 0">${cells.map(cell).join('')}</div>`;
const left = [[58, ['', 82, 'k'], ['ITSA4', 91, 'd'], ['KLBN11', 111, 'g']], [126, ['', 60, 'r', ' ', ' '], ['CCRO3', 112, 'R', '180,82M', '-3,27%', '#802024'], ['CYRE3', 108, 'R', '171,56M', '-2,02%', '#e81828']],
  [128, ['EQTC3', 94, 'g', '150,66M', '0,21%'], ['VBBR3', 94, 'd', '150,72M', '-0,85%', '#0c4438'], ['LREN3', 91, 'R', '140,24M', '-2,48%', '#e01820']], [118, ['RECO3', 94, 'r', '138,43M', '-0,66%', '#a84820'], ['GGBR4', 94, 'd', '138,42M', '-0,55%', '#1448a0'], ['CMIG4', 91, 'k', '135,29M', '-0,09%', '#108048']]];
const right = [[116, ['ALOS3', 96, 'R', '133,82M', '-2,53%', '#0c7c84'], ['BBDC3', 92, 'r', '133,21M', '-1,73%', '#e02430'], ['ASAI3', 88, 'R', '126,34M', '-2,14%', '#f06830'], ['TIMS3', 86, 'd', '125,31M', '-0,36%', '#10408c']],
  [114, ['STBP3', 96, 'g', '131,55M', '0,40%'], ['BRFS3', 92, 'r', '128,67M', '-1,56%'], ['RADL3', 88, 'd', '124,06M', '-0,16%'], ['CSAN3', 86, 'R', '118,82M', '-2,71%']],
  [98, ['AZUL4', 96, 'b', '116,30M', '-6,51%'], ['CXSE3', 94, 'g', '114,54M', '0,97%'], ['VIVT3', 90, 'd', '108,44M', '-0,47%'], ['ELET6', 82, 'R', '97,37M', '-2,46%']],
  [98, ['SANB11', 96, 'd'], ['ENGI11', 96, 'R', '114,14M', '-2,90%'], ['BRAV3', 86, 'R', '96,28M', '-2,24%'], ['SMTO3', 85, 'G']]];
const bottom = [[59, ['RAIZ4', 132, 'g'], ['AURE3', 108, 'r'], ['CMIN3', 107, 'r'], ['TAEE11', 83, 'r'], ['BRKM5', 80, 'r'], ['LWSA3', 65, 'r'], ['CPFE3', 64, 'r']],
  [58, ['MRFG3', 133, 'r'], ['UGPA3', 109, 'r'], ['AZZA3', 107, 'R'], ['COGN3', 84, 'R'], ['TRPL4', 80, 'd'], ['YDUQ3', 65, 'b'], ['RECV3', 64, 'R']],
  [55, ['VIVA3', 134, 'r'], ['MULT3', 114, 'r'], ['EGIE3', 101, 'd'], ['VAMO3', 83, 'b'], ['CVCB3', 81, 'b'], ['PCAR3', 67, 'r'], ['SLCE3', 64, 'g']],
  [51, ['CSNA3', 135, 'r'], ['FLRY3', 116, 'R'], ['IGTI11', 100, 'R'], ['IRBR3', 84, 'R'], ['BEEF3', 80, 'r'], ['ALPA4', 75, 'g'], ['PETZ3', 58, 'g']]];
document.getElementById('map').innerHTML = `<div class="map-top"><div class="map-col" style="flex:288 1 0">${left.map(row).join('')}</div><div class="map-col" style="flex:376 1 0">${right.map(row).join('')}</div></div><div class="map-col">${bottom.map(row).join('')}</div>`;

/* ---- drawing tools, centred on 0,0 ---- */
const C = '#1a98a8', S = `stroke="${C}" fill="none" stroke-width="1.200"`;
const p = (path, extra = S) => `<path d="${path}" ${extra}/>`;
const white = 'stroke="#ddd" fill="none" stroke-width="1.200"';
const letter = (s) => `<text x="3.500" y="6" font-size="7.500" font-weight="600" text-anchor="middle" fill="#ddd">${s}</text>`;
const on = '<rect x="-8" y="-7.700" width="16" height="15.500" rx="1.500" fill="#0a3550" stroke="#0e6394"/>';
const dots = (...a) => a.map(([x, y]) => `<circle cx="${x}" cy="${y}" r="1.100" fill="#2cc"/>`).join('');
const tools = [
  on + p('M-3-5.500L-3 4l2.300-2 1.700 3.700 1.700-.8-1.700-3.500H4z', 'fill="#eee"'),
  p('M0-5.500v3.500M0 2v3.500M-5.500 0h3.500M2 0h3.500M-.5 0h1', white),
  p('M-4 1l4-5 4 3-4 5h-2zM-2-1.500l4 3', white) + p('M-4.500 4h9', white), 0,
  on + p('M-4.500-1l1-.5V-3.500h1.500v-1h1.700v-.7h1.700v.7h1.700v1H4.500V1L2.500 5h-4z', 'fill="#eee"'),
  p('M-3.500 4.500V-.5a3.500 3.500 0 0 1 7 0V4.500', 'stroke="#e04040" fill="none" stroke-width="2.600"') + p('M-3.500 2.700V5M3.500 2.700V5', 'stroke="#ccc" stroke-width="2.600"'), 0,
  '~' + p('M-5 0q5-6 10 0q-5 6-10 0z', white) + '<circle r="1.700" fill="#ddd"/>',
  '~' + '<circle cy="1" r="4.300" fill="none" stroke="#ddd" stroke-width="1.500"/>' + p('M-1.500-5.300h3M0-1.500v2.500h2.500M0 1l-2 2M3.500-4l1.500 1.500', white),
  '~' + p('M-5-2v-3h3M-5 2v3h3M5 2v3H2M-3 3l.5-2L3-4.500l1.500 1.500L-1 2.500z', white),
  '~' + '<rect x="-5" y="-5" width="10" height="10.500" fill="#eee"/><text y="3.500" font-size="9" font-weight="800" text-anchor="middle" fill="#111">A</text>', 0,
  '~' + p('M4.500-5L-1 .5M5-3L1 2M-5 5q0-5 4-4q2 3-4 4z', S), 0,
  p('M-5-5L5 5'), p('M-5-5L5 5') + dots([-5, -5], [5, 5]), p('M-5-5L5 5', 'stroke="#9cc" stroke-width="1.200"') + dots([-5, -5]),
  p('M-5 3L-2-2 1 1.500 4.500-3') + dots([-5, 3], [-2, -2], [1, 1.5], [4.5, -3]), p('M-5-2L3 5M-3-5L5 3'), p('M-6 0H6'), p('M-6-4H6M-6 1H6M-6 4H6'), p('M-6-3H6M-6 3H6') + dots([-5, -3], [5, -3], [-5, 3], [5, 3]),
  p('M-5 3h1.500v-4 6M-1.500 3v-7M.5 3v-5M2 5v-10M4 2v-6M-5 2l10-3'), 0,
  p('M-4.500-2v-2.500h9V-2M0-4.500v9M-2 5h4', 'stroke="#1ab0c0" fill="none" stroke-width="1.300"'), p('M0-6l5 5H2v6.500h-4V-1h-3z', 'fill="#08c070"'), p('M0 6l5-5H2v-6.500h-4V1h-3z', 'fill="#f04040"'), 0,
  p('M-6-5.500H6M-6 5.500H6') + rect(-6, -3, 12, 5.5, '#1a7c88'), p('M-6-1L2-6M-6 2L4-4.500M-6 5L0 1') + letter('C'), p('M-5-4q5 0 9 8M-5 3q3-6 10-7M-1 5q1-6 6-5', 'stroke="#1ac0d0" fill="none" stroke-width="1.300"'),
  p('M-5-5V5L1-5M-5 5L5-3M-5 5h4') + letter('F'), p('M-6-5.500H6M-6 3H0M-6 5.500H0') + rect(-6, -3.5, 12, 4, '#1a7c88') + letter('P'), p('M-5 3L3-5M-5-1l3 3M-1-5l-2 5 5-1') + letter('F'), 0,
  p('M-5-6V6M5-6V6') + p('M-4 0h8', white), p('M-6-5.500H6M-6 5.500H6') + p('M0-4v8M-1.500-3.500h3', white), p('M-5-5H5V5H-5z') + p('M0-3.500v7M-3.500 0h7', white), 0,
  p('M-5-5H5V5H-5z'), '<circle r="5" ' + S + '/>', p('M-4.500-5V4.500H5z'), p('M-5 4L4-5Q6 0 3 3T-5 4z'), 0,
  p('M-6-6L0 0') + letter('R'), p('M-6-3l5 5M-5-6l4 4M-1-6l4 4') + letter('D'), p('M-6-6L0 0') + letter('A'), p('M-6 5L4-6') + letter('A'), 0,
  p('M-5.500-5V5.500M-2.500-5V5.500M2-5V5.500M5.500-5V5.500') + rect(-1.5, -5, 2, 10.5, C), p('M-5.500-5V5.500M5.500-5V5.500M2.500-5V5.500') + rect(-3, -5, 3.5, 10.5, C)];
document.getElementById('tools').innerHTML = '<hr>' + tools.map((t) => t === 0 ? '<div class="gap"><hr></div>' : t[0] === '~'
  ? `<svg width="26" height="16.270" viewBox="-7.700 -8.135 26 16.270">${t.slice(1)}<path d="M9-1h5L11.500 2z" fill="#ddd"/></svg>`
  : `<svg width="26" height="16.270" viewBox="-11.700 -8.135 26 16.270">${t}</svg>`).join('') +
  '<svg width="26" height="12" viewBox="-11.700 -7 26 12"><path d="M4.500-5l3 2.500 3-2.500M4.500-1l3 2.500 3-2.500" stroke="#ddd" fill="none" stroke-width="1.300"/></svg>';
```
